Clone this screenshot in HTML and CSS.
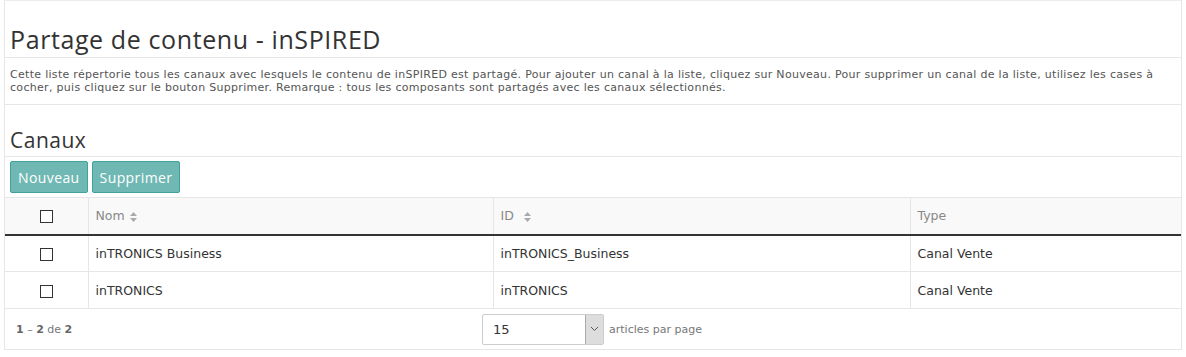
FILE: index.html
```html
<!DOCTYPE html>
<html lang="fr">
<head>
<meta charset="utf-8">
<title>Partage de contenu - inSPIRED</title>
<link rel="stylesheet" href="styles.css">
</head>
<body>
<div class="panel">
  <div class="section title-section">
    <h1 class="page-title">Partage de contenu - inSPIRED</h1>
  </div>
  <div class="section desc-section">
    <p class="desc">Cette liste répertorie tous les canaux avec lesquels le contenu de inSPIRED est partagé. Pour ajouter un canal à la liste, cliquez sur Nouveau. Pour supprimer un canal de la liste, utilisez les cases à cocher, puis cliquez sur le bouton Supprimer. Remarque : tous les composants sont partagés avec les canaux sélectionnés.</p>
  </div>
  <div class="section sub-section">
    <h2 class="sub-title">Canaux</h2>
  </div>
  <div class="section toolbar">
    <button class="btn">Nouveau</button>
    <button class="btn">Supprimer</button>
  </div>
  <table class="grid">
    <thead>
      <tr>
        <th class="col-check"><span class="checkbox"></span></th>
        <th class="col-name">Nom <span class="sort"><svg width="7" height="10" viewBox="0 0 7 10"><path d="M0 4 L3.5 0 L7 4 Z" fill="#aaa"/><path d="M0 6 L3.5 10 L7 6 Z" fill="#aaa"/></svg></span></th>
        <th class="col-id">ID <span class="sort sort-wide"><svg width="7" height="10" viewBox="0 0 7 10"><path d="M0 4 L3.5 0 L7 4 Z" fill="#aaa"/><path d="M0 6 L3.5 10 L7 6 Z" fill="#aaa"/></svg></span></th>
        <th class="col-type">Type</th>
      </tr>
    </thead>
    <tbody>
      <tr>
        <td class="col-check"><span class="checkbox"></span></td>
        <td>inTRONICS Business</td>
        <td>inTRONICS_Business</td>
        <td>Canal Vente</td>
      </tr>
      <tr>
        <td class="col-check"><span class="checkbox"></span></td>
        <td>inTRONICS</td>
        <td>inTRONICS</td>
        <td>Canal Vente</td>
      </tr>
    </tbody>
  </table>
  <div class="pager">
    <div class="pager-count"><b>1</b> – <b>2</b> de <b>2</b></div>
    <div class="pager-size">
      <div class="select">
        <span class="select-value">15</span>
        <span class="select-arrow"><svg width="9" height="6" viewBox="0 0 9 6"><path d="M1 1 L4.5 4.5 L8 1" fill="none" stroke="#555" stroke-width="1"/></svg></span>
      </div>
      <span class="per-page">articles par page</span>
    </div>
  </div>
</div>
</body>
</html>
```

FILE: styles.css
```css
* { box-sizing: border-box; }
html, body { margin: 0; padding: 0; background: #fff; }
body {
  font-family: "DejaVu Sans", Verdana, sans-serif;
  color: #333;
  padding: 0 4px;
}
.panel {
  border: 1px solid #e6e6e6;
  border-top: 1px solid #ededed;
  width: 1178px;
}
.section {
  border-bottom: 1px solid #e6e6e6;
  padding: 0 5px;
}
.title-section { height: 57px; display: flex; align-items: flex-end; padding-bottom: 4px; }
.page-title {
  margin: 0;
  font-family: "Open Sans", "DejaVu Sans", sans-serif;
  font-weight: 400;
  font-size: 25px;
  letter-spacing: 0.6px;
  line-height: 28px;
  color: #333;
}
.desc-section { height: 47px; padding-top: 10px; }
.desc {
  margin: 0;
  font-size: 11px;
  letter-spacing: 0.3px;
  line-height: 13px;
  color: #555;
}
.sub-section { height: 52px; display: flex; align-items: flex-end; padding-bottom: 3px; }
.sub-title {
  margin: 0;
  font-family: "Open Sans", "DejaVu Sans", sans-serif;
  font-weight: 400;
  font-size: 21px;
  letter-spacing: 0.5px;
  line-height: 26px;
}
.toolbar { height: 40px; display: flex; gap: 4px; align-items: flex-start; border-bottom: none; padding-top: 4px; }
.btn {
  height: 32px;
  padding: 0 7px;
  background: #6fb8b3;
  border: 1px solid #3fa39c;
  border-radius: 2px;
  color: #fff;
  font-family: "Open Sans", "DejaVu Sans", sans-serif;
  font-size: 14px;
  letter-spacing: 0.4px;
}
.grid {
  width: 100%;
  border-collapse: collapse;
  font-size: 12.5px;
}
.grid th, .grid td {
  text-align: left;
  padding: 0 0 0 7px;
  border-left: 1px solid #e6e6e6;
}
.grid th:first-child, .grid td:first-child { border-left: none; }
.grid thead tr { background: #f9f9f9; border-top: 1px solid #e6e6e6; border-bottom: 2px solid #333; }
.grid th { height: 37px; font-weight: 400; color: #888; }
.grid td { height: 37px; border-bottom: 1px solid #e6e6e6; }
.grid .col-check { width: 83px; text-align: center; padding: 0; }
.col-name { width: 405px; }
.col-id { width: 417px; }
.checkbox {
  display: inline-block;
  width: 13px; height: 13px;
  border: 1px solid #333;
  vertical-align: middle;
  background: #fff;
}
.sort { display: inline-block; vertical-align: middle; margin-left: 1px; line-height: 0; }
.sort-wide { margin-left: 6px; }
.pager {
  height: 40px;
  display: flex;
  align-items: center;
  padding: 0 11px;
  font-size: 11px;
  color: #777;
}
.pager-count { width: 466px; }
.pager-count b { font-weight: 700; color: #666; }
.pager-size { display: flex; align-items: center; gap: 5px; }
.select {
  width: 122px;
  height: 31px;
  border: 1px solid #ccc;
  border-radius: 2px;
  display: flex;
  background: #fff;
}
.select-value { flex: 1; padding-left: 10px; line-height: 29px; font-size: 13px; color: #333; }
.select-arrow {
  width: 18px;
  background: #ddd;
  border-left: 1px solid #aaa;
  display: flex; align-items: center; justify-content: center;
}
.per-page { font-size: 11px; color: #777; }
```
